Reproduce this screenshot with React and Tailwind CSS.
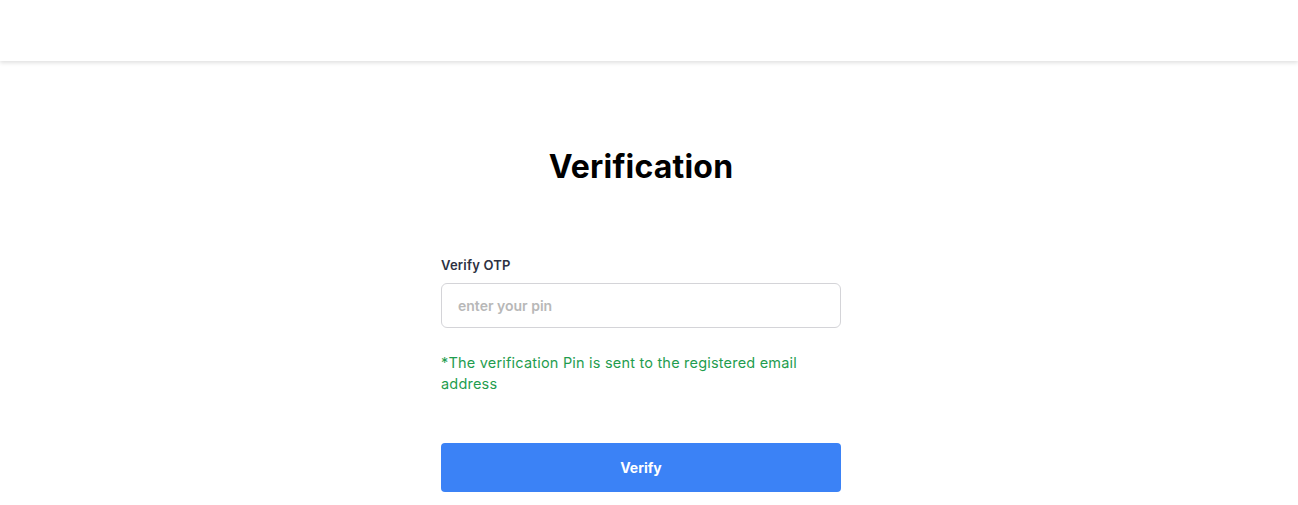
import React from 'react';

const App = () => {
  return (
    <div className="min-h-screen bg-white" style={{ fontFamily: 'Inter, "Liberation Sans", sans-serif' }}>
      {/* Top bar */}
      <header className="h-[61px] bg-white shadow-[0_2px_4px_rgba(0,0,0,0.12)]" />

      <main className="flex flex-col items-center pr-4">
        <h1 className="mt-[86px] text-[32px] font-bold leading-[40px] tracking-[0.2px] text-black">Verification</h1>

        <form className="mt-[70px] w-[400px]" onSubmit={(e) => e.preventDefault()}>
          <label className="block text-[13px] font-semibold leading-4 tracking-[0.2px] text-[#2d3142]">Verify OTP</label>
          <input
            type="text"
            placeholder="enter your pin"
            className="mt-[10px] h-[45px] w-full rounded-md border border-[#d4d4d8] px-4 text-[14px] font-semibold outline-none placeholder:text-[#b8b8b8]"
          />

          <p className="mt-[24px] text-[14.5px] leading-[21px] tracking-[0.2px] text-[#1f9d4f]">
            *The verification Pin is sent to the registered email address
          </p>

          <button
            type="submit"
            className="mt-[49px] h-[49px] w-full rounded bg-[#3b82f6] text-[14px] font-bold text-white"
          >
            Verify
          </button>
        </form>
      </main>
    </div>
  );
};

export default App;
